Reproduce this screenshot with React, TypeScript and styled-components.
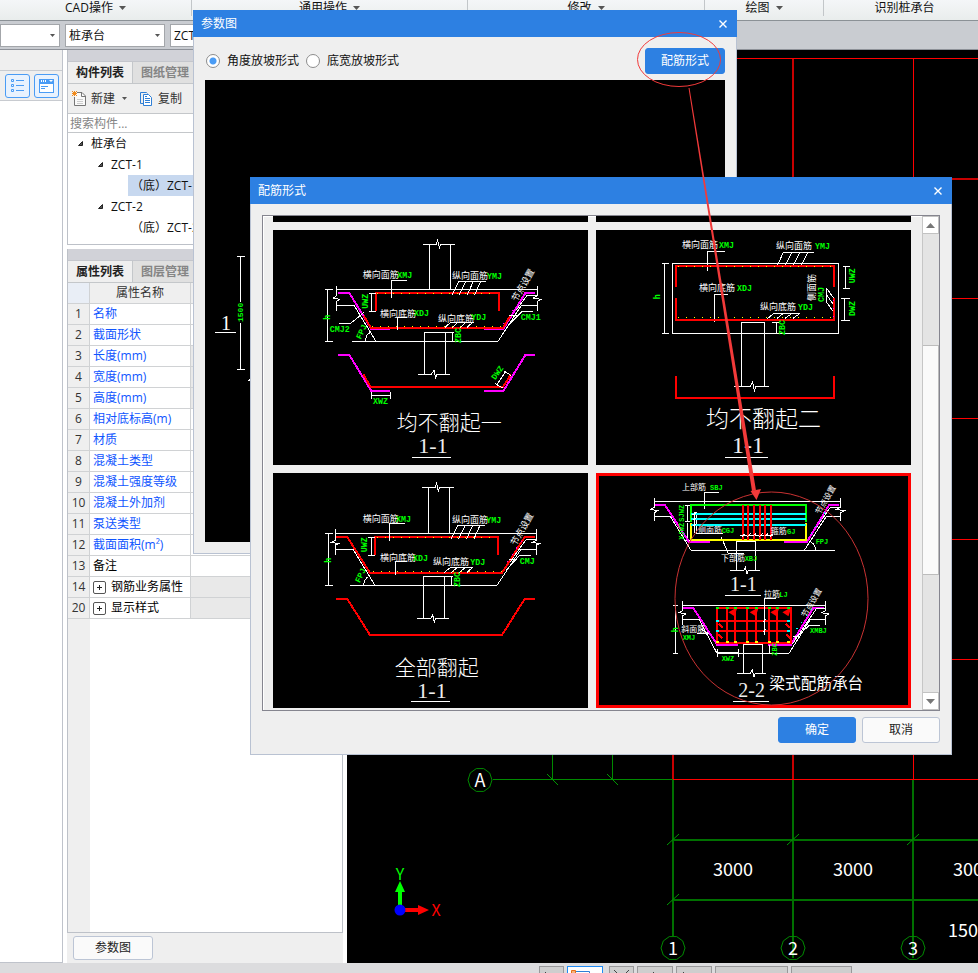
import React from "react";
import styled, { createGlobalStyle } from "styled-components";

const UI_FONT = '"Open Sans", "Noto Sans CJK SC", sans-serif';
const CAD_FONT = '"Noto Sans CJK SC", sans-serif';
const BLUE = "#2d80e2";

const GlobalStyle = createGlobalStyle`
  * { box-sizing: border-box; }
  html, body, #root { height: 100%; }
  body { margin: 0; overflow: hidden; background: #fff; font: 12px/16px ${UI_FONT}; color: #111; }
  button, input, select { font: inherit; color: inherit; }
  button { padding: 0; cursor: pointer; }
`;

/* ---------- frame ---------- */

const Shell = styled.div`
  position: relative;
  display: flex;
  flex-direction: column;
  height: 100vh;
  overflow: hidden;
`;

const Ribbon = styled.header`
  display: flex;
  flex: none;
  height: 21px;
  overflow: hidden;
  border-bottom: 1px solid #8b9196;
  background: linear-gradient(#f4f6f8, #e9edec);
`;

const RibbonGroup = styled.button<{ $width: number }>`
  flex: none;
  display: flex;
  justify-content: center;
  align-items: center;
  gap: 6px;
  width: ${(p) => p.$width}px;
  height: 16px;
  border: 0;
  border-right: 1px solid #c2c6c9;
  background: none;
`;

const ToolRow = styled.div`
  display: flex;
  flex: none;
  gap: 5px;
  height: 29px;
  padding: 3px 0 2px;
  border-bottom: 1px solid #8e9299;
  background: #c9ccd1;
`;

const ComboBox = styled.label<{ $width: number }>`
  display: grid;
  align-items: center;
  flex: none;
  width: ${(p) => p.$width}px;
  height: 23px;
  border: 1px solid #a3a6aa;
  background: #fff;
  > * { grid-area: 1 / 1; }
  > svg { justify-self: end; margin-right: 4px; pointer-events: none; }
`;

const ComboSelect = styled.select`
  appearance: none;
  width: 100%;
  height: 100%;
  padding: 0 3px;
  border: 0;
  background: transparent;
`;

const Body = styled.main`
  display: flex;
  flex: 1;
  min-height: 0;
`;

/* ---------- left strip ---------- */

const NavStrip = styled.aside`
  display: flex;
  flex-direction: column;
  flex: none;
  width: 63px;
  border-right: 1px solid #bfc3cb;
  border-bottom: 1px solid #bfc3cb;
`;

const NavHead = styled.div`
  height: 21px;
  border-bottom: 1px solid #c8cbd0;
  background: #efefef;
`;

const NavTools = styled.div`
  display: flex;
  justify-content: flex-end;
  gap: 4px;
  height: 30px;
  padding: 3px 3px 0 0;
  border-bottom: 1px solid #c8cbd0;
  background: #efefef;
`;

const NavButton = styled.button`
  display: grid;
  place-items: center;
  width: 25px;
  height: 24px;
  border: 1px solid #4a9cf5;
  border-radius: 3px;
  background: #e8f2fe;
`;

/* ---------- middle dock ---------- */

const Dock = styled.section`
  display: flex;
  flex-direction: column;
  flex: none;
  width: 276px;
  margin: 0 4px;
`;

const Pane = styled.div<{ $grow?: boolean }>`
  display: flex;
  flex-direction: column;
  flex: ${(p) => (p.$grow ? "1" : "none")};
  min-height: 0;
  margin-bottom: ${(p) => (p.$grow ? 0 : 4)}px;
  border: 1px solid #bdc1c8;
  border-top: 0;
  background: #fff;
`;

const Grip = styled.div`
  height: 12px;
  flex: none;
  border-bottom: 1px solid #c4c6cc;
  background: #d1d2d8;
`;

const Tabs = styled.div`
  display: flex;
  flex: none;
  height: 22px;
  border-bottom: 1px solid #c4c7ca;
  background: #e0e0e0;
`;

const Tab = styled.button<{ $active?: boolean }>`
  width: 65px;
  border: 0;
  border-right: 1px solid #c4c7ca;
  background: ${(p) => (p.$active ? "#efefef" : "#e0e0e0")};
  color: ${(p) => (p.$active ? "#222" : "#858585")};
  font-weight: 700;
`;

const Actions = styled.div`
  display: flex;
  align-items: center;
  flex: none;
  gap: 13px;
  height: 30px;
  padding-left: 4px;
  border-bottom: 1px solid #c4c7ca;
  background: #efefef;
`;

const Action = styled.button`
  display: flex;
  align-items: center;
  gap: 5px;
  border: 0;
  background: none;
  color: #333;
  > svg + svg { margin-left: 2px; }
`;

const ActionText = styled.span`
  margin-right: 2px;
`;

const Search = styled.input`
  flex: none;
  width: 100%;
  height: 19px;
  padding: 0 2px;
  border: 0;
  border-bottom: 1px solid #c4c7ca;
  outline: 0;
  &::placeholder { color: #858585; opacity: 1; }
`;

const Tree = styled.ul`
  margin: 0;
  padding: 0 0 6px;
  list-style: none;
`;

const TreeRow = styled.li<{ $level: number }>`
  display: flex;
  align-items: center;
  gap: 7px;
  height: 21px;
  margin-left: ${(p) => [9, 29, 60][p.$level]}px;
`;

const TreeLeaf = styled.span<{ $selected?: boolean }>`
  flex: 1;
  padding-left: 3px;
  line-height: 21px;
  background: ${(p) => (p.$selected ? "#c7d8ef" : "none")};
`;

const TableArea = styled.div`
  flex: 1;
  min-height: 0;
  overflow: hidden;
  background: linear-gradient(90deg, #efefef 22px, #fff 22px);
`;

const PropTable = styled.table`
  width: 100%;
  table-layout: fixed;
  border-collapse: separate;
  border-spacing: 0;
  th, td {
    height: 21px;
    padding: 0 0 0 3px;
    border-right: 1px solid #d0d2d4;
    border-bottom: 1px solid #d0d2d4;
    line-height: 16px;
    white-space: nowrap;
    font-weight: 400;
  }
  th { background: #efefef; color: #333; padding: 0; text-align: center; }
`;

const HeadCell = styled.th<{ $width?: number; $tint?: boolean }>`
  width: ${(p) => (p.$width ? p.$width + "px" : "auto")};
  && { background: ${(p) => (p.$tint ? "#e9eef6" : "#efefef")}; }
`;

const NameCell = styled.td<{ $link?: boolean }>`
  color: ${(p) => (p.$link ? "#0f55ff" : "#000")};
`;

const ValueCell = styled.td<{ $muted?: boolean }>`
  background: ${(p) => (p.$muted ? "#e9e9e9" : "#fff")};
`;

const GroupName = styled.div`
  display: flex;
  align-items: center;
  gap: 5px;
`;

const Expander = styled.button`
  display: grid;
  place-items: center;
  width: 13px;
  height: 13px;
  border: 1px solid #555;
  border-radius: 2px;
  background: #fff;
`;

const DockFooter = styled.div`
  flex: none;
  height: 30px;
  padding: 3px 6px;
  background: #efefef;
`;

/* ---------- shared controls ---------- */

const PushButton = styled.button<{ $primary?: boolean; $width: number; $height: number }>`
  width: ${(p) => p.$width}px;
  height: ${(p) => p.$height}px;
  border: 1px solid ${(p) => (p.$primary ? BLUE : "#bcc5d5")};
  border-radius: 3px;
  background: ${(p) => (p.$primary ? BLUE : "#fafafa")};
  color: ${(p) => (p.$primary ? "#fff" : "#222")};
`;

/* ---------- drawing area ---------- */

const Viewport = styled.svg`
  display: block;
  flex: 1;
  min-width: 0;
  height: 100%;
  background: #000;
`;

const StatusBar = styled.footer`
  display: flex;
  flex: none;
  gap: 3px;
  height: 10px;
  padding: 3px 0 0 539px;
  overflow: hidden;
  background: #dcdcde;
`;

const StatusButton = styled.button<{ $width: number; $active?: boolean; $after?: boolean }>`
  display: flex;
  justify-content: center;
  flex: none;
  width: ${(p) => p.$width}px;
  height: 22px;
  padding-top: 3px;
  margin-right: ${(p) => (p.$after ? 3 : 0)}px;
  border: 1px solid ${(p) => (p.$active ? "#1f8bf5" : "#98989a")};
  background: ${(p) => (p.$active ? "#fff" : "#cecece")};
`;

/* ---------- dialogs ---------- */

const ParamDialog = styled.section`
  position: absolute;
  left: 193px;
  top: 10px;
  width: 544px;
  border: 1px solid #b9c2d2;
  border-top: 0;
  background: #efefef;
`;

const FormDialog = styled(ParamDialog)`
  left: 250px;
  top: 177px;
  width: 702px;
`;

const TitleBar = styled.div`
  display: flex;
  align-items: center;
  justify-content: space-between;
  height: 27px;
  margin: 0 -1px;
  padding: 0 8px;
  background: ${BLUE};
  color: #fff;
`;

const Close = styled.button`
  display: grid;
  place-items: center;
  width: 12px;
  height: 12px;
  border: 0;
  background: none;
`;

const OptionRow = styled.div`
  display: flex;
  align-items: center;
  gap: 7px;
  height: 43px;
  padding: 0 11px 0 12px;
  > button { margin-left: auto; margin-top: 5px; }
`;

const Option = styled.label`
  display: flex;
  align-items: center;
  gap: 7px;
  margin-top: 4px;
`;

const Radio = styled.input`
  appearance: none;
  width: 14px;
  height: 14px;
  margin: 0;
  border: 1px solid #8d8d8d;
  border-radius: 50%;
  background: #fff;
  &:checked { background: radial-gradient(circle, #4a9cf5 3px, #fff 4px); }
`;

const ParamDrawing = styled.svg`
  display: block;
  width: 520px;
  height: 462px;
  margin: 0 0 11px 11px;
  background: #000;
`;

const Gallery = styled.div`
  display: flex;
  justify-content: space-between;
  height: 496px;
  margin: 11px 11px 0;
  border: 1px solid #85858f;
  box-shadow: inset 1px 1px #fff;
`;

const ThumbGrid = styled.div`
  display: grid;
  grid-template-columns: 315px 315px;
  grid-auto-rows: 235px;
  align-content: end;
  gap: 8px;
  padding: 0 0 2px 10px;
  overflow: hidden;
`;

const Thumb = styled.button<{ $selected?: boolean }>`
  position: relative;
  border: 0;
  background: #000;
  > svg { display: block; width: 315px; height: 235px; }
  &::after {
    content: "";
    position: absolute;
    inset: 0;
    border: ${(p) => (p.$selected ? "3px solid #f00" : "0")};
  }
`;

const ScrollBar = styled.div`
  display: flex;
  flex-direction: column;
  width: 17px;
  background: #e4e4e4;
  border-left: 1px solid #c6c6c6;
`;

const ScrollButton = styled.button`
  display: grid;
  place-items: center;
  flex: none;
  height: 18px;
  border: 1px solid #c2c2c2;
  border-left: 0;
  background: #fff;
`;

const ScrollTrack = styled.div`
  flex: 1;
  padding-top: 111px;
`;

const ScrollThumb = styled.div`
  height: 230px;
  border: 1px solid #bcbcbc;
  border-left: 0;
  background: #fafafa;
`;

const DialogFooter = styled.div`
  display: flex;
  justify-content: flex-end;
  gap: 6px;
  padding: 6px 11px 11px;
`;

const Markup = styled.svg`
  position: absolute;
  left: 0;
  top: 0;
  width: 978px;
  height: 973px;
  pointer-events: none;
`;

/* ---------- icons ---------- */

const Caret = ({ small }: { small?: boolean }) => (
  <svg width={small ? 5 : 7} height={small ? 3 : 4} viewBox="0 0 7 4"><path d="M0 0h7L3.500 4z" fill="#555" /></svg>
);
const Triangle = () => (
  <svg width="7" height="7" viewBox="0 0 7 7"><path d="M5.500 1.500v4h-4z" fill="#555" stroke="#222" /></svg>
);
const CloseIcon = () => (
  <svg width="10" height="10" viewBox="0 0 10 10"><path d="M1.500 1.500l7 7M8.500 1.500l-7 7" stroke="#fff" strokeWidth="1.400" /></svg>
);
const Plus = () => (
  <svg width="5" height="5" viewBox="0 0 5 5"><path d="M2.500 0v5M0 2.500h5" stroke="#222" /></svg>
);
const ListIcon = () => (
  <svg width="13" height="14" viewBox="0 0 13 14" fill="none" stroke="#4a9cf5">
    <path d="M.5 .5h2v2h-2zM.5 5.500h2v2h-2zM.5 10.500h2v2h-2zM5 1.500h8M5 6.500h8M5 11.500h8" />
  </svg>
);
const WindowIcon = () => (
  <svg width="15" height="14" viewBox="0 0 15 14">
    <path d="M0 0h15v14H0z" fill="#4a9cf5" />
    <path d="M1 5h13v8H1zM2 1h1v2H2zM4 1h1v2H4zM6 1h1v2H6zM10 1h4l-2 2z" fill="#fff" />
    <path d="M2 7.500h7M2 9.500h4" stroke="#4a9cf5" />
  </svg>
);
const NewIcon = () => (
  <svg width="14" height="15" viewBox="0 0 14 15" fill="none">
    <path d="M5 1.500h5l3.500 3.500v9.500h-11V6" fill="#fafafa" stroke="#777" />
    <path d="M9.500 1.500v4h4" stroke="#777" />
    <path d="M5 8.500h6M5 10.500h6M5 12.500h6" stroke="#ccc" />
    <path d="M0 0l5 5M5 0L0 5M2.500 0v5M0 2.500h5" stroke="#f08a1c" />
  </svg>
);
const CopyIcon = () => (
  <svg width="13" height="14" viewBox="0 0 13 14" fill="none" stroke="#2f7fd6">
    <path d="M3 11.500H.5V.5h6l1 1" />
    <path d="M3.500 2.500h5l3 3v8h-8z" fill="#fff" />
    <path d="M5 6.500h5M5 8.500h5M5 10.500h5M5 4.500h2" />
  </svg>
);

/* ---------- CAD drawing parts (3 units per pixel) ---------- */

type LineProps = { d: string; c?: string; w?: number };
const Line = ({ d, c = "#fff", w = 3 }: LineProps) => (
  <path d={d} fill="none" stroke={c} strokeWidth={w} shapeRendering="crispEdges" />
);

type NoteProps = { x: number; y: number; s: string; turn?: number; size?: number };
const Zh = ({ x, y, s, turn = 0, size = 27 }: NoteProps) => (
  <text x={x} y={y} fontFamily={CAD_FONT} fontSize={size} fill="#fff" transform={`rotate(${turn} ${x} ${y})`}>{s}</text>
);
const Code = ({ x, y, s, turn = 0, size = 25 }: NoteProps) => (
  <text x={x} y={y} fontFamily='"Liberation Mono", monospace' fontWeight={700} fontSize={size} fill="#0f0" transform={`rotate(${turn} ${x} ${y})`}>{s}</text>
);
const Title = ({ x, y, s, size = 63 }: NoteProps) => (
  <text x={x} y={y} fontFamily={CAD_FONT} fontSize={size} fontWeight={300} fill="#fff">{s}</text>
);
/* section marks are centred on their underline */
const Mark = ({ x, y, s, size = 66 }: NoteProps) => (
  <text x={x} y={y} textAnchor="middle" fontFamily='"Liberation Serif", serif' fontSize={size} fill="#eee">{s}</text>
);
const Dots = ({ d, c = "#ff0" }: LineProps) => (
  <path d={d} stroke={c} strokeWidth={3} strokeDasharray="3 21" shapeRendering="crispEdges" />
);

const NoFlipOne = () => (
  <svg viewBox="69 75 945 705">
    <Line d="M519 118h40l4-12l5 22l4-10h43M538 119v134M601 119v134M258 253h605M226 253h22M233 253v156M225 409h24M306 409h438M259 243v30l-10 6l20 4l-10 6v29M862 243v30l-12 6l24 4l-12 6v29M259 301h53l66 108M862 301h-48l-70 108M862 270h-30l-74 98" />
    <Line d="M264 264h34l66 108h56M856 264h-30l-66 108h-58M264 450h34l66 108h56M856 450h-30l-66 108h-58" c="#f0f" w={6} />
    <Line d="M378 318v-53h369v53M341 332l22 37h396l22-37M340 508l22 38h397l24-38" c="#f00" w={6} />
    <Dots d="M382 265h360M366 365h390" />
    <Dots d="M760 358l60-90" c="#f0f" />
    <Line d="M470 226h-46v53M708 229h-82l-20 40M648 229l-20 40M670 229l-18 40M692 229l-18 40M472 338h-30v37M672 352h-70l-18 16M624 352l-18 16M648 352l-18 16M668 352l-18 16M364 265v55M358 265h20M358 320h20M342 322l-40 33h-36M850 319h-34l-40 40M800 330h-24M346 409q2-22 14-26" />
    <Line d="M523 507V382h64v125M504 508h40l8-12l5 22l4-10h39M606 382v27M588 382h24M364 560v22M422 560v22M364 572h58M768 498l-28 42M762 498l22 14M736 536l24 14" />
    <Zh x={338} y={220} s="横向面筋" /><Code x={442} y={218} s="XMJ" />
    <Zh x={606} y={222} s="纵向面筋" /><Code x={711} y={221} s="YMJ" />
    <Zh x={390} y={337} s="横向底筋" /><Code x={492} y={333} s="XDJ" />
    <Zh x={564} y={352} s="纵向底筋" /><Code x={664} y={345} s="YDJ" />
    <Zh x={800} y={292} s="节点设置" turn={-60} />
    <Code x={353} y={311} s="UWZ" turn={-90} /><Code x={240} y={344} s="h" turn={-90} />
    <Code x={239} y={380} s="CMJ2" /><Code x={812} y={345} s="CMJ1" />
    <Code x={332} y={404} s="FPJ" turn={-65} /><Code x={633} y={414} s="ZBC" turn={-90} />
    <Code x={736} y={526} s="DWZ" turn={-55} /><Code x={369} y={597} s="XWZ" />
    <Title x={440} y={676} s="均不翻起一" /><Mark x={549} y={745} s="1-1" />
    <Line d="M486 757h117" />
  </svg>
);

const NoFlipTwo = () => (
  <svg viewBox="18 75 945 705">
    <Line d="M247 175h499v210H247zM216 176h22M216 386h22M223 176v210M405 139h-53v58M672 142h-92l-20 45M606 142l-24 45M630 142l-24 45M654 142l-24 45M414 268h-41v82M630 325h-78l-20 16M580 325l-20 16M606 325l-22 16M630 325l-22 16M759 184h20M759 251h20M767 184v67M753 280h26M753 346h26M763 280v66M710 250v42l20 28M710 250l20 28M710 270l20 28M453 545V352h71v193M432 545h48l8-14l5 26l4-12h40M560 352v33M546 352h22" />
    <Line d="M258 246v-64h474v64M258 279v66h474v-66M258 513v65h474v-65" c="#f00" w={6} />
    <Dots d="M264 185h466M264 338h466" /><Dots d="M731 286v50" c="#f0f" />
    <Zh x={276} y={130} s="横向面筋" /><Code x={387} y={128} s="XMJ" />
    <Zh x={558} y={132} s="纵向面筋" /><Code x={675} y={131} s="YMJ" />
    <Zh x={327} y={259} s="横向底筋" /><Code x={441} y={257} s="XDJ" />
    <Zh x={510} y={316} s="纵向底筋" /><Code x={624} y={315} s="YDJ" />
    <Zh x={676} y={288} s="侧面筋" turn={-90} /><Code x={702} y={291} s="CMJ" turn={-90} />
    <Code x={794} y={235} s="UWZ" turn={-90} /><Code x={794} y={333} s="DWZ" turn={-90} />
    <Code x={210} y={283} s="h" turn={-90} /><Code x={586} y={390} s="ZBC" turn={-90} />
    <Title x={348} y={665} s="均不翻起二" size={69} />
    <Mark x={474} y={744} s="1-1" size={72} />
    <Line d="M405 757h129" />
  </svg>
);

const AllFlip = () => (
  <svg viewBox="69 24 945 705">
    <Line d="M516 67h40l4-12l5 24l4-12h43M535 68v138M598 68v138M256 205h603M225 205h24M236 205v156M225 361h24M300 361h441M256 192v34l-12 6l22 4l-10 4v29M859 192v34l-12 6l22 4l-10 4v29M256 253h53l66 108M859 253h-46l-72 108M859 223h-30l-70 96" />
    <Line d="M258 216h34l68 108h396l68-108h31M375 270v-54h369v54M258 402h34l68 108h396l68-108h31" c="#f00" w={6} />
    <Dots d="M380 217h360M370 320h386" /><Dots d="M758 310l62-90" c="#f0f" />
    <Line d="M466 175h-48v52M706 181h-82l-20 40M646 181l-20 40M668 181l-18 40M690 181l-18 40M470 290h-34v40M670 307h-68l-20 16M622 307l-18 16M646 307l-18 16M668 307l-18 16M364 216v55M355 216h20M355 271h20M843 271h-34l-40 44M800 282h-24M341 361q2-20 14-26M520 460V334h64v126M501 460h42l5-10l5 22l4-12h40M604 334v27M586 334h24" />
    <Zh x={338} y={172} s="横向面筋" /><Code x={438} y={170} s="XMJ" />
    <Zh x={606} y={175} s="纵向面筋" /><Code x={709} y={173} s="YMJ" />
    <Zh x={390} y={289} s="横向底筋" /><Code x={489} y={287} s="XDJ" />
    <Zh x={549} y={301} s="纵向底筋" /><Code x={661} y={299} s="YDJ" />
    <Zh x={797} y={244} s="节点设置" turn={-60} />
    <Code x={350} y={262} s="UWZ" turn={-90} /><Code x={243} y={293} s="h" turn={-90} />
    <Code x={809} y={297} s="CMJ" /><Code x={329} y={355} s="FPJ" turn={-65} />
    <Code x={629} y={366} s="ZBC" turn={-90} />
    <Title x={434} y={631} s="全部翻起" /><Mark x={546} y={698} s="1-1" />
    <Line d="M483 709h117" />
  </svg>
);

const BeamCap = () => (
  <svg viewBox="18 24 945 705">
    <Line d="M193 109h558M193 99v28l-10 6l20 4l-10 6v26M751 99v28l-12 6l24 4l-12 6v26M193 154h48l62 102h432M751 154h-42l-66 102M751 127h-30l-70 100M387 82h-44v49M293 122v48M285 122h16M285 170h16M293 174v52M285 226h16M320 142v62h80M394 216l20 48h48M440 316V230h57v86M420 316h42l4-10l5 20l4-10h35M450 211h100M664 232q12 8 14 24" />
    <Line d="M195 120h30l72 111h63M747 120h-30l-66 111h-69M278 429h32l72 111h62M702 429h-32l-68 111h-68" c="#f0f" w={6} />
    <Line d="M303 170v-50h345v50" c="#0f0" w={6} />
    <Line d="M303 174v50h345v-50" c="#ff0" w={6} />
    <Line d="M303 147h345M303 162h345M303 180h345" c="#0ff" w={6} />
    <Line d="M459 120v104M475 120v104M491 120v104M510 120v104M526 120v104M543 120v104M382 429h220v106H382zM412 429v106M436 429v106M472 429v106M499 429v106M538 429v106M562 429v106M382 468h220M382 498h220M386 476l12 12M386 508l12 12M588 476l12 12M588 508l12 12" c="#f00" w={6} />
    <path d="M438 432l-18 10l12 8zM502 432l-18 10l12 8zM564 432l-18 10l12 8zM600 432l-18 10l12 8z" fill="#f00" stroke="#f00" strokeWidth={5} />
    <Line d="M312 142v62M308 150l12-8M308 166l12-8M308 184l12-8M456 214l10-8M472 214l10-8M488 214l10-8M508 214l10-8M524 214l10-8M540 214l10-8" />
    <Line d="M278 421h428M277 409v28l-10 6l20 4l-10 6v26M706 409v28l-12 6l24 4l-12 6v26M277 463h50l54 102h216l64-102h45M706 430h-26l-72 106M257 421v144M249 421h16M249 565h16M558 400h-35v110M518 472l10-10M518 502l10-10M320 505h36l-22-12M382 553v24M446 553v24M382 563h64M690 481h-32l-44 40M630 515h-20M539 540v25M530 565h24M460 625V538h58v87M441 625h40l6-10l5 22l4-12h31" />
    <Line d="M379 430h9M409 430h9M433 430h9M469 430h9M496 430h9M535 430h9M559 430h9M592 430h9" c="#0f0" w={6} />
    <Line d="M379 530h9M409 530h9M433 530h9M469 530h9M496 530h9M535 530h9M559 530h9M592 530h9" c="#ff0" w={6} />
    <Line d="M379 468h9M592 468h9M379 498h9M592 498h9" c="#0ff" w={6} />
    <Dots d="M620 492l50-66M664 206l50-80" c="#0ff" />
    <Zh x={276} y={76} s="上部筋" size={24} /><Code x={360} y={75} s="SBJ" size={21} />
    <Zh x={324} y={205} s="侧面筋" size={24} /><Code x={395} y={204} s="CGJ" size={21} />
    <Zh x={542} y={207} s="箍筋" size={24} /><Code x={591} y={206} s="GJ" size={21} />
    <Zh x={393} y={289} s="下部筋" size={24} /><Code x={464} y={287} s="XBJ" size={21} />
    <Zh x={522} y={397} s="拉筋" size={24} /><Code x={568} y={395} s="LJ" size={21} />
    <Zh x={274} y={501} s="斜面筋" size={24} /><Code x={278} y={524} s="XMJ" size={21} />
    <Code x={660} y={503} s="XMBJ" size={21} /><Code x={677} y={236} s="FPJ" size={21} />
    <Code x={395} y={587} s="XWZ" size={21} /><Code x={560} y={572} s="ZBC" turn={-90} size={21} />
    <Code x={281} y={170} s="SJWZ" turn={-90} size={21} /><Code x={281} y={224} s="XJWZ" turn={-90} size={21} />
    <Code x={264} y={502} s="h" turn={-90} />
    <Zh x={690} y={150} s="节点设置" turn={-60} size={24} />
    <Zh x={648} y={459} s="节点设置" turn={-60} size={24} />
    <Mark x={460} y={378} s="1-1" size={60} /><Mark x={485} y={695} s="2-2" size={60} />
    <Line d="M405 391h108M429 709h108" />
    <Zh x={538} y={673} s="梁式配筋承台" size={47} />
  </svg>
);

const Bubble = ({ x, y, s }: NoteProps) => (
  <g>
    <polygon
      points={[0, 1, 2, 3, 4, 5, 6, 7, 8, 9].map((i) => `${x + 12 * Math.cos((i * Math.PI) / 5)},${y + 12 * Math.sin((i * Math.PI) / 5)}`).join(" ")}
      fill="none" stroke="#008a00"
    />
    <text x={x} y={y + 7} textAnchor="middle" fontFamily={CAD_FONT} fontSize={18} fill="#fff">{s}</text>
  </g>
);

const PlanView = () => (
  <Viewport viewBox="347 50 631 913" preserveAspectRatio="xMinYMin slice">
    <g fill="none" shapeRendering="crispEdges">
      <path d="M793 58v722M673 58v722" stroke="#c80000" strokeWidth="2" />
      <path d="M913.500 58v722" stroke="#f00" />
      <path d="M673 58.500h400M673 298.500h400M673 418.500h400M673 539.500h400M673 659.500h400M673 779.500h400" stroke="#f00" />
      <path d="M673 179h400" stroke="#c80000" strokeWidth="2" />
      <path d="M493 779.500h180M552.500 740v39M612.500 740v39" stroke="#008a00" />
      <path d="M673 840h400M673 900h400M673 780v156M793 780v178M913 780v178" stroke="#007000" strokeWidth="2" />
    </g>
    <path d="M547 774l11 11M607 774l11 11M667 845l12-11M787 845l12-11M907 845l12-11M667 905l12-11" stroke="#009a00" />
    <Bubble x={480} y={780} s="A" />
    <Bubble x={673} y={948} s="1" />
    <Bubble x={793} y={948} s="2" />
    <Bubble x={913} y={948} s="3" />
    <g fontFamily={CAD_FONT} fontSize={18} fill="#fff">
      <text x="713" y="876">3000</text>
      <text x="833" y="876">3000</text>
      <text x="953" y="876">3000</text>
      <text x="948" y="937">15000</text>
    </g>
    <path d="M398 905V892h-3l5-11l5 11h-3v13z" fill="#0f0" />
    <path d="M405 908h13v-3l11 5l-11 5v-3h-13z" fill="#f00" />
    <circle cx="400" cy="910" r="5.500" fill="#00f" />
    <g fontFamily={CAD_FONT} fontSize={16} textAnchor="middle">
      <text x="400" y="880" fill="#0f0">Y</text>
      <text x="436" y="916" fill="#f00">X</text>
    </g>
  </Viewport>
);

/* ---------- data ---------- */

type Row = { no: number; name: string; kind?: "plain" | "group" };
const rows: Row[] = [
  { no: 1, name: "名称" }, { no: 2, name: "截面形状" }, { no: 3, name: "长度(mm)" },
  { no: 4, name: "宽度(mm)" }, { no: 5, name: "高度(mm)" }, { no: 6, name: "相对底标高(m)" },
  { no: 7, name: "材质" }, { no: 8, name: "混凝土类型" }, { no: 9, name: "混凝土强度等级" },
  { no: 10, name: "混凝土外加剂" }, { no: 11, name: "泵送类型" }, { no: 12, name: "截面面积(m²)" },
  { no: 13, name: "备注", kind: "plain" }, { no: 14, name: "钢筋业务属性", kind: "group" },
  { no: 20, name: "显示样式", kind: "group" },
];
const mutedRows = [3, 4, 5, 14, 20];

export default function App() {
  return (
    <>
      <GlobalStyle />
      <Shell>
        <Ribbon>
          <RibbonGroup $width={192}>CAD操作<Caret /></RibbonGroup>
          <RibbonGroup $width={276}>通用操作<Caret /></RibbonGroup>
          <RibbonGroup $width={237}>修改<Caret /></RibbonGroup>
          <RibbonGroup $width={119}>绘图<Caret /></RibbonGroup>
          <RibbonGroup $width={162}>识别桩承台</RibbonGroup>
        </Ribbon>
        <ToolRow>
          <ComboBox $width={60}><ComboSelect aria-label="楼层" defaultValue=""><option value="" /></ComboSelect><Caret small /></ComboBox>
          <ComboBox $width={100}><ComboSelect aria-label="构件类型"><option>桩承台</option></ComboSelect><Caret small /></ComboBox>
          <ComboBox $width={100}><ComboSelect aria-label="构件"><option>ZCT-1</option></ComboSelect><Caret small /></ComboBox>
        </ToolRow>
        <Body>
          <NavStrip>
            <NavHead />
            <NavTools>
              <NavButton aria-label="列表"><ListIcon /></NavButton>
              <NavButton aria-label="窗口"><WindowIcon /></NavButton>
            </NavTools>
          </NavStrip>
          <Dock>
            <Pane>
              <Grip />
              <Tabs><Tab $active>构件列表</Tab><Tab>图纸管理</Tab></Tabs>
              <Actions>
                <Action><NewIcon /><ActionText>新建</ActionText><Caret small /></Action>
                <Action><CopyIcon />复制</Action>
              </Actions>
              <Search placeholder="搜索构件..." aria-label="搜索构件" />
              <Tree>
                <TreeRow $level={0}><Triangle />桩承台</TreeRow>
                <TreeRow $level={1}><Triangle />ZCT-1</TreeRow>
                <TreeRow $level={2}><TreeLeaf $selected>（底）ZCT-1</TreeLeaf></TreeRow>
                <TreeRow $level={1}><Triangle />ZCT-2</TreeRow>
                <TreeRow $level={2}><TreeLeaf>（底）ZCT-2</TreeLeaf></TreeRow>
              </Tree>
            </Pane>
            <Pane $grow>
              <Grip />
              <Tabs><Tab $active>属性列表</Tab><Tab>图层管理</Tab></Tabs>
              <TableArea>
                <PropTable>
                  <thead>
                    <tr><HeadCell $width={22} $tint /><HeadCell $width={101}>属性名称</HeadCell><HeadCell>属性值</HeadCell></tr>
                  </thead>
                  <tbody>
                    {rows.map((r) => (
                      <tr key={r.no}>
                        <th scope="row">{r.no}</th>
                        <NameCell $link={!r.kind}>
                          {r.kind === "group" ? (
                            <GroupName><Expander aria-label={"展开" + r.name}><Plus /></Expander>{r.name}</GroupName>
                          ) : r.name}
                        </NameCell>
                        <ValueCell $muted={mutedRows.includes(r.no)} />
                      </tr>
                    ))}
                  </tbody>
                </PropTable>
              </TableArea>
            </Pane>
            <DockFooter><PushButton $width={80} $height={24}>参数图</PushButton></DockFooter>
          </Dock>
          <PlanView />
        </Body>
        <StatusBar>
          <StatusButton $width={25} aria-label="正交"><svg width="14" height="12"><path d="M.5 2v9h9" fill="none" stroke="#444" /></svg></StatusButton>
          <StatusButton $width={36} $active $after aria-label="捕捉"><svg width="28" height="12"><path d="M4.500 1.500h14v9h-14z" fill="#fff" stroke="#2f7fd6" /><path d="M.5 .5h4v5h-4z" fill="#f7b27a" stroke="#e8701a" /></svg></StatusButton>
          <StatusButton $width={25} aria-label="交点"><svg width="16" height="14"><path d="M0 0l14 14M15 0L1 14" stroke="#444" /></svg></StatusButton>
          <StatusButton $width={36} aria-label="垂点"><svg width="12" height="12"><path d="M4.500 2v9M0 11h10" stroke="#444" /></svg></StatusButton>
          <StatusButton $width={36} aria-label="中点"><svg width="22" height="12"><path d="M.5 2v9h9" fill="none" stroke="#444" /></svg></StatusButton>
          <StatusButton $width={73} aria-label="顶点" />
          <StatusButton $width={61} aria-label="坐标" />
        </StatusBar>

        <ParamDialog role="dialog" aria-label="参数图">
          <TitleBar>参数图<Close aria-label="关闭"><CloseIcon /></Close></TitleBar>
          <OptionRow>
            <Option><Radio type="radio" name="slope" defaultChecked />角度放坡形式</Option>
            <Option><Radio type="radio" name="slope" />底宽放坡形式</Option>
            <PushButton $primary $width={80} $height={26}>配筋形式</PushButton>
          </OptionRow>
          <ParamDrawing viewBox="205 80 520 462">
            <g stroke="#fff" shapeRendering="crispEdges">
              <path d="M240.500 256v46M240.500 323v47M237 256.500h8M237 369.500h8M215 332.500h21M248 381l3-2" />
            </g>
            <text x="221" y="330" fontFamily='"Liberation Serif", serif' fontSize="20" fill="#fff">1</text>
            <text x="243" y="322" fontFamily='"Liberation Mono", monospace' fontWeight="700" fontSize="8" fill="#0f0" transform="rotate(-90 243 322)">1500</text>
          </ParamDrawing>
        </ParamDialog>

        <FormDialog role="dialog" aria-label="配筋形式">
          <TitleBar>配筋形式<Close aria-label="关闭"><CloseIcon /></Close></TitleBar>
          <Gallery>
            <ThumbGrid>
              <Thumb aria-label="配筋形式一" />
              <Thumb aria-label="配筋形式二" />
              <Thumb><NoFlipOne /></Thumb>
              <Thumb><NoFlipTwo /></Thumb>
              <Thumb><AllFlip /></Thumb>
              <Thumb $selected><BeamCap /></Thumb>
            </ThumbGrid>
            <ScrollBar>
              <ScrollButton aria-label="向上滚动"><svg width="9" height="5"><path d="M0 5L4.500 0L9 5z" fill="#777" /></svg></ScrollButton>
              <ScrollTrack><ScrollThumb /></ScrollTrack>
              <ScrollButton aria-label="向下滚动"><svg width="9" height="5"><path d="M0 0L4.500 5L9 0z" fill="#777" /></svg></ScrollButton>
            </ScrollBar>
          </Gallery>
          <DialogFooter>
            <PushButton $primary $width={78} $height={26}>确定</PushButton>
            <PushButton $width={78} $height={26}>取消</PushButton>
          </DialogFooter>
        </FormDialog>

        <Markup viewBox="0 0 978 973" fill="none" stroke="#f23a3a" aria-hidden="true">
          <ellipse cx="679" cy="59.500" rx="41.500" ry="27" />
          <ellipse cx="771.500" cy="598.500" rx="96.500" ry="106.500" stroke="#c83232" />
          <path d="M688.500 88L752 491L756 490.500L689.500 88z" fill="#f23a3a" stroke="none" />
          <path d="M750.500 491l10.500-2l-4.500 11z" fill="#f23a3a" stroke="none" />
        </Markup>
      </Shell>
    </>
  );
}
